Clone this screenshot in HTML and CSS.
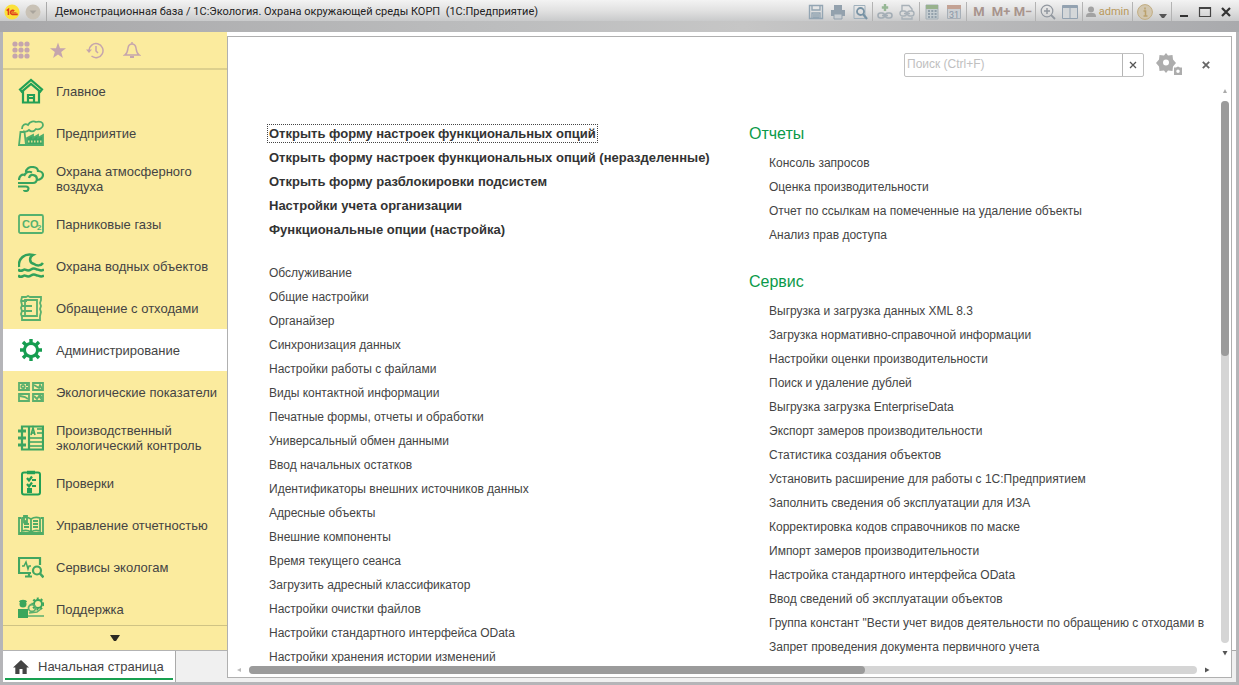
FILE: index.html
```
<!DOCTYPE html>
<html lang="ru">
<head>
<meta charset="utf-8">
<title>Демонстрационная база / 1С:Экология</title>
<link rel="stylesheet" href="styles.css">
</head>
<body>
<header class="titlebar">
  <button class="logo" aria-label="Меню 1С"><svg viewBox="0 0 18 18"><circle cx="9" cy="9" r="8.5" fill="#fbe13a"/><g fill="none" stroke="#e0401c" stroke-width="1.8"><path d="M3 7.5 5 6v6.500"/><path d="M11.500 8a2.300 2.300 0 1 0-2 3.700H15.500"/><path d="M10.700 8.800a1 1 0 1 0-.8 1.100H14" stroke-width="1"/></g></svg></button>
  <button class="round" aria-label="Список"><svg viewBox="0 0 16 16"><circle cx="8" cy="8" r="7.500" fill="#c9c2b6"/><path d="M4.500 6.500h7L8 10z" fill="#a9a49c"/></svg></button>
  <h1 class="caption">Демонстрационная база / 1С:Экология. Охрана окружающей среды КОРП&nbsp; (1С:Предприятие)</h1>
  <div class="group">
    <button aria-label="Сохранить"><svg viewBox="0 0 16 16" fill="none" stroke="#93a5b3" stroke-width="1.400"><path d="M1.500 1.500h13v13h-13zM4 1.500v4.500h8V1.500M4 14.500V9h8v5.500M5 11h6M5 13h6"/></svg></button>
    <button aria-label="Печать"><svg viewBox="0 0 16 16" fill="#93a1ad"><path d="M4 1h8v5H4zM1 6h14v6h-3v-2H4v2H1z"/><path d="M4 10h8v5H4z" fill="#c9ced2" stroke="#93a1ad"/></svg></button>
    <button aria-label="Просмотр"><svg viewBox="0 0 16 16" fill="none" stroke="#9fb0bc"><path d="M2 1.500h11v13H2z"/><circle cx="8.500" cy="7.500" r="3.500" stroke="#7893a5" stroke-width="1.800"/><path d="m11 10 4 5" stroke="#7893a5" stroke-width="2.200"/></svg></button>
  </div>
  <div class="group">
    <button aria-label="Добавить ссылку"><svg viewBox="0 0 16 16" fill="none" stroke="#a3adb5" stroke-width="1.600"><path d="M8 0v7M4.800 3.500h6.400" stroke="#96b795" stroke-width="2.400"/><rect x="1" y="9" width="6.500" height="5" rx="2.500"/><rect x="8.500" y="9" width="6.500" height="5" rx="2.500"/><path d="M5 11.500h6"/></svg></button>
    <button aria-label="Перейти по ссылке"><svg viewBox="0 0 16 16" fill="none" stroke="#a8b1b8" stroke-width="1.400"><path d="M3 7V1.500h7L13 5v2"/><rect x="1" y="7" width="6.500" height="5" rx="2.500"/><rect x="8.500" y="7" width="6.500" height="5" rx="2.500"/><path d="M5 9.500h6M3 13v2h10v-2"/></svg></button>
  </div>
  <div class="group">
    <button aria-label="Калькулятор"><svg viewBox="0 0 16 16"><path d="M2 1h12v14H2z" fill="#c5cdd1" stroke="#a5b0b6"/><path d="M2 1h12v4H2z" fill="#98b28d"/><path d="M4 7h9M4 10h9M4 13h9" stroke="#92a0ab" stroke-width="2" stroke-dasharray="2 1.300"/></svg></button>
    <button aria-label="Календарь"><svg viewBox="0 0 16 16"><path d="M1.500 1.500h13v13h-13z" fill="#cbcfd3" stroke="#a7afb7"/><path d="M1 1h14v4H1z" fill="#c3a294"/><text x="8" y="13.500" class="cal">31</text></svg></button>
  </div>
  <div class="group memory"><button>M</button><button>M+</button><button>M−</button></div>
  <div class="group">
    <button aria-label="Масштаб"><svg viewBox="0 0 16 16" fill="none" stroke="#9298a0" stroke-width="1.200"><circle cx="7" cy="7" r="5.800"/><path d="M4 7h6M7 4v6" stroke-width="1.500"/><path d="m11 11 4 4" stroke-width="1.800"/></svg></button>
    <button aria-label="Окна"><svg viewBox="0 0 16 16" fill="#d4d7d9" stroke="#93a2b1"><path d="M.5 1.500h15v13H.5zM8 2v12"/><path d="M1 2.500h14" stroke-width="3"/></svg></button>
  </div>
  <div class="group"><button class="user"><svg viewBox="0 0 10 12" fill="#a2a2a2"><circle cx="5" cy="3.500" r="3"/><path d="M0 11c0-4 2-4 5-4s5 0 5 4z"/></svg>admin</button></div>
  <div class="group info">
    <button aria-label="Информация"><svg viewBox="0 0 16 16"><circle cx="8" cy="8" r="7.400" fill="#d2c7b0" stroke="#c2ad81"/><path d="M6.500 7H8.500v5M6.500 12h4M8 3.500v2" fill="none" stroke="#bba16b" stroke-width="1.500"/></svg></button>
    <button class="small" aria-label="Ещё"><svg viewBox="0 0 8 16"><path d="M0 10h8l-3 4H3z" fill="#555"/></svg></button>
  </div>
  <div class="group window">
    <button aria-label="Свернуть"><svg viewBox="0 0 16 16"><path d="M4 12h8" stroke="#333" stroke-width="2"/></svg></button>
    <button aria-label="Развернуть"><svg viewBox="0 0 16 16"><path d="M2.500 3.500h11v9h-11zM2 4.500h12" stroke="#444" fill="none" stroke-width="1.200"/></svg></button>
    <button aria-label="Закрыть"><svg viewBox="0 0 16 16"><path d="m4 4 8 8m0-8-8 8" stroke="#333" stroke-width="2.200"/></svg></button>
  </div>
</header>

<div class="workspace">
  <aside class="side">
    <div class="tools">
      <button aria-label="Функции"><svg viewBox="0 0 18 18" fill="#c5a5ad"><circle cx="3" cy="3" r="2.600"/><circle cx="9" cy="3" r="2.600"/><circle cx="15" cy="3" r="2.600"/><circle cx="3" cy="9" r="2.600"/><circle cx="9" cy="9" r="2.600"/><circle cx="15" cy="9" r="2.600"/><circle cx="3" cy="15" r="2.600"/><circle cx="9" cy="15" r="2.600"/><circle cx="15" cy="15" r="2.600"/></svg></button>
      <button aria-label="Избранное"><svg viewBox="0 0 18 18" fill="#c5a5ad"><path d="m9 1.500 2 5.700 6 .1-4.800 3.700 1.700 5.900L9 13.400l-4.900 3.500L5.800 11 1 7.300l6-.1z"/></svg></button>
      <button aria-label="История"><svg viewBox="0 0 18 18" fill="none" stroke="#c5a5ad" stroke-width="1.500"><path d="M3 9.500A7 7 0 1 1 5.500 15"/><path d="M10 5v5l2 2"/><path d="M0 8.500h6L3 12z" fill="#c5a5ad" stroke="none"/></svg></button>
      <button aria-label="Оповещения"><svg viewBox="0 0 18 18" fill="none" stroke="#c5a5ad" stroke-width="1.500"><path d="M2 14c2.500-1.500 2.500-4 3-7 .4-2.500 1.500-4 4-4s3.600 1.500 4 4c.5 3 .5 5.500 3 7zM9 3V1"/><path d="M7 16h4" stroke-width="2"/></svg></button>
    </div>
    <nav class="sections">
      <a href="#"><svg viewBox="0 0 26 26" fill="none" stroke="#22a055" stroke-width="2.200"><path d="M2 11.500 13 2l11 9.500-1.800 2.200L13 6 3.800 13.700z"/><path d="M5 13v11.500h16V13M10 24v-7h6v7M10 20h6"/></svg>Главное</a>
      <a href="#"><svg viewBox="0 0 26 26" fill="none" stroke="#4fae6a" stroke-width="1.800"><path d="M1 25 2.500 12h4L8 25z"/><path d="M9 18l6-3v3l5-3v3l5-3v10H9z" fill="#3da661"/><path d="M10 21.500h14" stroke="#d8dd91" stroke-dasharray="1.500 1.500"/><path d="M4 9c0-4 3-6 6-4 2-4 6-4 8-3 4-1 7 0 7 3s-4 5-7 4c-3 4-6 2-7 1-2 2-5 2-6 1"/></svg>Предприятие</a>
      <a href="#" class="tall"><svg viewBox="0 0 26 26" fill="none" stroke="#38a45e" stroke-width="2.200"><path d="M1 14c0-4 3-6 5.500-5C8 6 11 5 14 6.500"/><path d="M8 6c0-3 3-5 6-5 4 0 6 2 6 4 3 0 5 2 5 4s-2 5-6 5"/><path d="M0 17h15a4 4 0 1 0-4-5M0 20.500h8c3.500 0 3 4.500 0 4.500-2 0-2-1-2-1"/></svg>Охрана атмосферного воздуха</a>
      <a href="#"><svg viewBox="0 0 26 26"><rect x="1" y="4" width="24" height="18" rx="1.500" fill="none" stroke="#54b16e" stroke-width="1.800"/><text x="4" y="17" class="co">CO</text><text x="19" y="19" class="sub">2</text></svg>Парниковые газы</a>
      <a href="#"><svg viewBox="0 0 26 26" fill="none" stroke="#32a25a" stroke-width="2.500"><path d="M1 14C0 6 6 0 15 2c-4 2-4 8 1 9 3 2 7 2 9-1"/><path d="M0 16.500c3 3 5 0 6.500 0s3 2.500 6.500 0 5 0 6.500 0 3 2.500 6.500 0M0 22.500c3 3 5 0 6.500 0s3 2.500 6.500 0 5 0 6.500 0 3 2.500 6.500 0"/></svg>Охрана водных объектов</a>
      <a href="#"><svg viewBox="0 0 26 26" fill="none" stroke="#58b06c" stroke-width="1.800"><path d="M4 2h4l2-1 2 1h11v3l-1 3 1 3-1 3 1 3-1 4v4H4v-3l-1-3 1-3-1-3 1-3-1-4z"/><path d="M7 5h12v16H7zM3 6h6M3 11h11M3 16h11M3 21h7"/></svg>Обращение с отходами</a>
      <a href="#" class="active"><svg viewBox="0 0 26 26" fill="none" stroke="#169d50"><circle cx="13" cy="13" r="6.500" stroke-width="3"/><path d="M13 2v4m0 14v4M2 13h4m14 0h4M5 5l3 3m10 10 3 3m0-16-3 3M8 18l-3 3" stroke-width="3.400"/></svg>Администрирование</a>
      <a href="#"><svg viewBox="0 0 26 26" fill="none" stroke="#5bb06d" stroke-width="1.800"><path d="M1 4h10v7H1zM15 4h10v7H15zM1 15h10v7H1zM15 15h10v7H15z"/><circle cx="5" cy="7.500" r="1.700"/><path d="M8 6h2M8 9h2M16 6l5 3 1-3 2 4M2 17l5 1 3 2M16 17l3 3 2-3 3 4M22 16l2 3"/></svg>Экологические показатели</a>
      <a href="#" class="tall"><svg viewBox="0 0 26 26" fill="none" stroke="#3ca560" stroke-width="2.200"><path d="M4 1.500h21v23H4zM11 1.500v23"/><path d="M0 6h8M0 13h8M0 20h8" stroke-width="3"/><path d="m13 10 2-7 2 7M13 8h4M12 13h12M12 17h12M12 21h12M19 4h5M19 8h5" stroke-width="1.600"/></svg>Производственный экологический контроль</a>
      <a href="#"><svg viewBox="0 0 26 26" fill="none" stroke="#22a055" stroke-width="2"><rect x="4" y="2.500" width="18" height="22" rx="2"/><path d="M9 2.500h8" stroke-width="3.500"/><path d="m9 8 2 2.500 3-4M9 14l2 2.500 3-4M14 10h4M14 16h4" stroke-width="2.200"/><path d="M9 18h5v5H9z" fill="#22a055" stroke="none"/></svg>Проверки</a>
      <a href="#"><svg viewBox="0 0 26 26" fill="none" stroke="#4fac66" stroke-width="1.800"><path d="M3 6H1v16h24V6h-2"/><path d="M13 7c-3-2-6-2-9-1v13c3-1 6-1 9 1 3-2 6-2 9-1V6c-3-1-6-1-9 1zv13M1 21h24"/><path d="M6 4h3v6l-1.500-1L6 10zM6 12h5M6 15h5M15 9h5M15 12h5M15 15h5"/></svg>Управление отчетностью</a>
      <a href="#"><svg viewBox="0 0 26 26" fill="none" stroke="#41a661" stroke-width="2.200"><path d="M13 19H1V4h21v7M7 22.500h7M11 18v4"/><path d="M4 12h2l2-4 2 7 1-3h2" stroke-width="1.500"/><circle cx="19" cy="16.500" r="4"/><path d="m22 19.500 3.500 4" stroke-width="2.600"/></svg>Сервисы экологам</a>
      <a href="#"><svg viewBox="0 0 26 26" fill="#3aa65c"><path d="M0 22v-9h10v9z"/><circle cx="5" cy="8" r="3.500"/><path d="M1 6c0-3 8-3 8 0z"/><g fill="none" stroke="#5bb06d"><circle cx="20" cy="8" r="4" stroke-width="2" stroke="#3aa65c"/><circle cx="20" cy="8" r="5.500" stroke-width="2" stroke-dasharray="2 2" stroke="#3aa65c"/><circle cx="14" cy="12" r="3.500" stroke-width="1.800"/><path d="M10 20h16M11 17l8-1 4-3" stroke-width="1.500"/></g></svg>Поддержка</a>
    </nav>
    <button class="more" aria-label="Показать ещё"><svg viewBox="0 0 10 6"><path d="M0 0h10L6 6H4z" fill="#2c2a22"/></svg></button>
    <div class="tabs">
      <a href="#" class="tab"><svg viewBox="0 0 16 14" fill="#444"><path d="M8 0 0 7.500h2.300V14H6.500V9h3v5h4.200V7.500H16z"/></svg>Начальная страница</a>
    </div>
  </aside>

  <main class="panel">
    <div class="search-row">
      <div class="search">
        <input type="text" placeholder="Поиск (Ctrl+F)" aria-label="Поиск">
        <button aria-label="Очистить"><svg viewBox="0 0 8 8"><path d="m1 1 6 6m0-6-6 6" stroke="#555" stroke-width="1.300"/></svg></button>
      </div>
      <button class="gear" aria-label="Настройка"><svg viewBox="0 0 28 24" fill="#adadad" fill-rule="evenodd"><path d="M8 2.500 10 0l2 2.500 4.500-.5.500 4.500L20 10l-3 3.500-.5 4.500-4.500-.5L10 20l-2-2.500-4.500.5-.5-4.500L0 10l3-3.500L3.500 2zM10 6.500a3 3 0 1 0 0 6 3 3 0 0 0 0-6z"/><path d="M18 14.500h2l2-1 2 1h2v7.500h-8zM22 16.500a1.500 1.500 0 1 0 0 3.500 1.500 1.500 0 0 0 0-3.500z"/></svg></button>
      <button class="close" aria-label="Закрыть панель"><svg viewBox="0 0 8 8"><path d="m.8.8 6.400 6.400m0-6.400L.8 7.200" stroke="#666" stroke-width="1.800"/></svg></button>
    </div>
    <div class="content">
      <div class="column">
        <ul class="links strong">
          <li><a href="#" class="focused">Открыть форму настроек функциональных опций</a></li>
          <li><a href="#">Открыть форму настроек функциональных опций (неразделенные)</a></li>
          <li><a href="#">Открыть форму разблокировки подсистем</a></li>
          <li><a href="#">Настройки учета организации</a></li>
          <li><a href="#">Функциональные опции (настройка)</a></li>
        </ul>
        <ul class="links">
          <li><a href="#">Обслуживание</a></li>
          <li><a href="#">Общие настройки</a></li>
          <li><a href="#">Органайзер</a></li>
          <li><a href="#">Синхронизация данных</a></li>
          <li><a href="#">Настройки работы с файлами</a></li>
          <li><a href="#">Виды контактной информации</a></li>
          <li><a href="#">Печатные формы, отчеты и обработки</a></li>
          <li><a href="#">Универсальный обмен данными</a></li>
          <li><a href="#">Ввод начальных остатков</a></li>
          <li><a href="#">Идентификаторы внешних источников данных</a></li>
          <li><a href="#">Адресные объекты</a></li>
          <li><a href="#">Внешние компоненты</a></li>
          <li><a href="#">Время текущего сеанса</a></li>
          <li><a href="#">Загрузить адресный классификатор</a></li>
          <li><a href="#">Настройки очистки файлов</a></li>
          <li><a href="#">Настройки стандартного интерфейса OData</a></li>
          <li><a href="#">Настройки хранения истории изменений</a></li>
        </ul>
      </div>
      <div class="column">
        <section>
          <h2>Отчеты</h2>
          <ul class="links">
            <li><a href="#">Консоль запросов</a></li>
            <li><a href="#">Оценка производительности</a></li>
            <li><a href="#">Отчет по ссылкам на помеченные на удаление объекты</a></li>
            <li><a href="#">Анализ прав доступа</a></li>
          </ul>
        </section>
        <section>
          <h2>Сервис</h2>
          <ul class="links">
            <li><a href="#">Выгрузка и загрузка данных XML 8.3</a></li>
            <li><a href="#">Загрузка нормативно-справочной информации</a></li>
            <li><a href="#">Настройки оценки производительности</a></li>
            <li><a href="#">Поиск и удаление дублей</a></li>
            <li><a href="#">Выгрузка загрузка EnterpriseData</a></li>
            <li><a href="#">Экспорт замеров производительности</a></li>
            <li><a href="#">Статистика создания объектов</a></li>
            <li><a href="#">Установить расширение для работы с 1С:Предприятием</a></li>
            <li><a href="#">Заполнить сведения об эксплуатации для ИЗА</a></li>
            <li><a href="#">Корректировка кодов справочников по маске</a></li>
            <li><a href="#">Импорт замеров производительности</a></li>
            <li><a href="#">Настройка стандартного интерфейса OData</a></li>
            <li><a href="#">Ввод сведений об эксплуатации объектов</a></li>
            <li><a href="#">Группа констант "Вести учет видов деятельности по обращению с отходами в</a></li>
            <li><a href="#">Запрет проведения документа первичного учета</a></li>
          </ul>
        </section>
      </div>
    </div>
    <div class="scroll vertical">
      <svg viewBox="0 0 6 6" fill="#aaa"><path d="M3 1l2 4H1z"/></svg>
      <div class="track"><div class="thumb"></div></div>
      <svg viewBox="0 0 6 6" fill="#555"><path d="M3 5.500l2.500-4.500h-5z"/></svg>
    </div>
    <div class="scroll horizontal">
      <svg viewBox="0 0 6 6" fill="#bbb"><path d="M1 3l4-2v4z"/></svg>
      <div class="track"><div class="thumb"></div></div>
      <svg viewBox="0 0 6 6" fill="#555"><path d="M5.500 3L1 .5v5z"/></svg>
    </div>
  </main>
</div>
</body>
</html>
```

FILE: styles.css
```
* { box-sizing: border-box; }

body {
  margin: 0;
  height: 100vh;
  display: flex;
  flex-direction: column;
  overflow: hidden;
  background: #b5b5b8;
  color: #444;
  font: 13px/15px "Liberation Sans", Arial, sans-serif;
}

button {
  display: flex;
  align-items: center;
  justify-content: center;
  padding: 0;
  border: 0;
  background: none;
  color: inherit;
  font: inherit;
}

a { color: inherit; text-decoration: none; }
ul { margin: 0; padding: 0; list-style: none; }

.titlebar {
  display: flex;
  align-items: flex-start;
  flex: none;
  height: 32px;
  padding: 2px 2px 0 3px;
  background:
    linear-gradient(90deg, #a8a8aa, #bcbdbe 40%, #c6c6c6 60%, #a9aaad) 0 21px / 100% 11px no-repeat,
    linear-gradient(#f3f3f3, #e0e0e0 35%, #c9cacb 21px);
}
.titlebar button { width: 22px; height: 19px; }
.titlebar svg { width: 16px; height: 16px; }
.titlebar .logo { width: 18px; }
.titlebar .round { width: 20px; margin: 0 3px 0 2px; }
.caption {
  flex: 1;
  min-width: 0;
  margin: 0;
  padding-left: 8px;
  border-left: 1px solid #aaa;
  overflow: hidden;
  white-space: nowrap;
  color: #222;
  font: 11px/19px Roboto, sans-serif;
}
.group {
  display: flex;
  padding: 0 1px;
  border-left: 1px solid #b3b3b3;
}
.caption + .group { border-left-color: transparent; }
.titlebar .window button { width: 21px; }
.memory { color: #a8948d; font: bold 13px/19px Roboto, sans-serif; }
.titlebar .user { width: 47px; gap: 3px; color: #b8985a; font: 11px/19px Roboto, sans-serif; }
.titlebar .user svg { width: 10px; height: 12px; }
.titlebar .small { width: 14px; }
.titlebar .small svg { width: 8px; }
.cal { fill: #8995a3; font: 9px Roboto, sans-serif; text-anchor: middle; }

.workspace {
  flex: 1;
  min-height: 0;
  display: grid;
  grid-template-columns: 224px minmax(0, 1fr);
  grid-template-rows: minmax(0, 1fr);
  margin: 0 3px 3px;
  background: linear-gradient(#fff 618px, #a9a9a9 618px, #a9a9a9 619px, #f0f0f0 619px);
}

.side {
  display: flex;
  flex-direction: column;
  min-height: 0;
  background: #fbeb9e;
}
.tools {
  display: flex;
  flex: none;
  gap: 18px;
  height: 38px;
  padding: 0 8px;
  align-items: center;
  border-bottom: 2px solid #ddd08d;
}
.tools svg { width: 18px; height: 18px; }
.tools button { width: 19px; }
.sections {
  flex: 1;
  min-height: 0;
  overflow: hidden;
}
.sections a {
  display: flex;
  align-items: center;
  gap: 12px;
  height: 42px;
  padding: 0 8px 0 15px;
}
.sections a.tall { height: 49px; padding-right: 20px; }
.sections a.active { background: #fff; }
.sections svg { flex: none; width: 26px; height: 26px; }
.co { fill: #54b16e; font: bold 11px "Liberation Sans", sans-serif; }
.sub { fill: #54b16e; font: bold 8px "Liberation Sans", sans-serif; }
.more {
  flex: none;
  height: 25px;
  border-top: 1px solid #cfc384;
}
.more svg { width: 10px; height: 6px; }
.tabs {
  display: flex;
  flex: none;
  height: 32px;
  border-top: 1px solid #b3b3b3;
  background: #f0f0f0;
}
.tab {
  display: flex;
  align-items: center;
  gap: 9px;
  padding: 0 11px 0 10px;
  border-right: 1px solid #aaa;
  background: linear-gradient(#18a050, #18a050) 2px calc(100% - 2px) / calc(100% - 4px) 2px no-repeat #fff;
}
.tab svg { width: 16px; height: 14px; }

.panel {
  display: grid;
  grid-template-columns: minmax(0, 1fr) 13px;
  grid-template-rows: 48px minmax(0, 1fr) 14px;
  margin: 4px 4px 4px 0;
  border: 1px solid #b0b0b0;
  background: #fff;
}
.search-row {
  grid-column: 1 / -1;
  display: flex;
  align-items: center;
  justify-content: flex-end;
  padding: 7px 21px 0 0;
}
.search {
  display: flex;
  width: 240px;
  height: 24px;
  border: 1px solid #c0c0c0;
  border-radius: 2px;
}
.search input {
  flex: 1;
  min-width: 0;
  padding: 0 2px;
  border: 0;
  background: none;
  font: 12px/15px "Liberation Sans", Arial, sans-serif;
}
.search input::placeholder { color: #c0c0c0; opacity: 1; }
.search button { width: 21px; border-left: 1px solid #b5b5b5; }
.search svg, .close svg { width: 8px; height: 8px; }
.gear { margin: 0 18px 0 12px; }
.gear svg { width: 28px; height: 24px; }

.content {
  display: grid;
  grid-template-columns: 480px minmax(0, 1fr);
  min-height: 0;
  padding: 37px 0 0 41px;
  overflow: hidden;
}
.column { display: flex; flex-direction: column; gap: 19px; }
.links { font-size: 12px; }
.links li { height: 24px; line-height: 24px; white-space: nowrap; }
.strong { color: #333; font-size: 13px; font-weight: bold; }
.focused { outline: 1px dotted #444; outline-offset: 1px; }
section .links { padding-left: 20px; }
section { padding-bottom: 4px; }
h2 {
  margin: 0 0 5px;
  color: #0b9a4a;
  font-size: 16px;
  font-weight: normal;
  line-height: 24px;
}

.scroll { display: flex; align-items: center; gap: 7px; }
.scroll svg { flex: none; width: 6px; height: 6px; }
.track { flex: 1; border-radius: 4px; background: #d5d5d5; }
.thumb { border-radius: 4px; background: #9b9b9b; }
.vertical { flex-direction: column; padding: 3px 0 7px; }
.vertical .track { width: 8px; }
.vertical .thumb { height: 47%; }
.horizontal { padding: 0 8px; }
.horizontal .track { height: 8px; }
.horizontal .thumb { width: 65%; height: 8px; }
```
